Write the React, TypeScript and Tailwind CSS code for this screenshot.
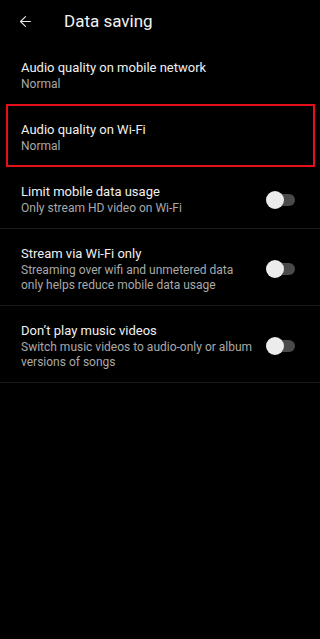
import { ArrowLeft } from "lucide-react";

type Item = {
  title: string;
  sub: string[];
  toggle?: boolean;
  selected?: boolean;
  divider?: boolean;
};

const items: Item[] = [
  { title: "Audio quality on mobile network", sub: ["Normal"] },
  { title: "Audio quality on Wi-Fi", sub: ["Normal"], selected: true },
  {
    title: "Limit mobile data usage",
    sub: ["Only stream HD video on Wi-Fi"],
    toggle: true,
    divider: true,
  },
  {
    title: "Stream via Wi-Fi only",
    sub: ["Streaming over wifi and unmetered data", "only helps reduce mobile data usage"],
    toggle: true,
    divider: true,
  },
  {
    title: "Don’t play music videos",
    sub: ["Switch music videos to audio-only or album", "versions of songs"],
    toggle: true,
    divider: true,
  },
];

const Toggle = () => (
  <div className="relative w-[29px] h-[18px] shrink-0">
    <div className="absolute right-0 top-[3px] w-[24px] h-[12px] rounded-full bg-[#4a4a4a]" />
    <div className="absolute left-0 top-0 w-[18px] h-[18px] rounded-full bg-[#ececec]" />
  </div>
);

const Row = ({ item }: { item: Item }) => (
  <div
    className={
      "flex items-center " +
      (item.selected
        ? "ml-[6px] mr-[5px] pl-[13px] pr-[19px] pt-[15px] pb-[11px] border-2 border-[#e5101c]"
        : "pl-[21px] pr-[25px] pt-[16px] pb-[12px]") +
      (item.divider ? " border-b border-[#1c1c1c]" : "")
    }
  >
    <div className="flex-1 min-w-0">
      <div className="text-[13px] leading-[18px] text-[#f0f0f0]">{item.title}</div>
      {item.sub.map((s) => (
        <div key={s} className="text-[12px] leading-[15px] text-[#a9a9a9]">
          {s}
        </div>
      ))}
    </div>
    {item.toggle && <Toggle />}
  </div>
);

export default function App() {
  return (
    <div
      className="w-[320px] h-[639px] bg-black overflow-hidden"
      style={{ fontFamily: "Roboto, 'Noto Sans', sans-serif" }}
    >
      <div className="h-[43px] flex items-center pl-[17px]">
        <ArrowLeft className="w-[17px] h-[17px] text-[#e8e8e8]" strokeWidth={1.5} />
        <span className="ml-[30px] text-[17px] text-[#f2f2f2]">Data saving</span>
      </div>
      {items.map((it) => (
        <Row key={it.title} item={it} />
      ))}
    </div>
  );
}
